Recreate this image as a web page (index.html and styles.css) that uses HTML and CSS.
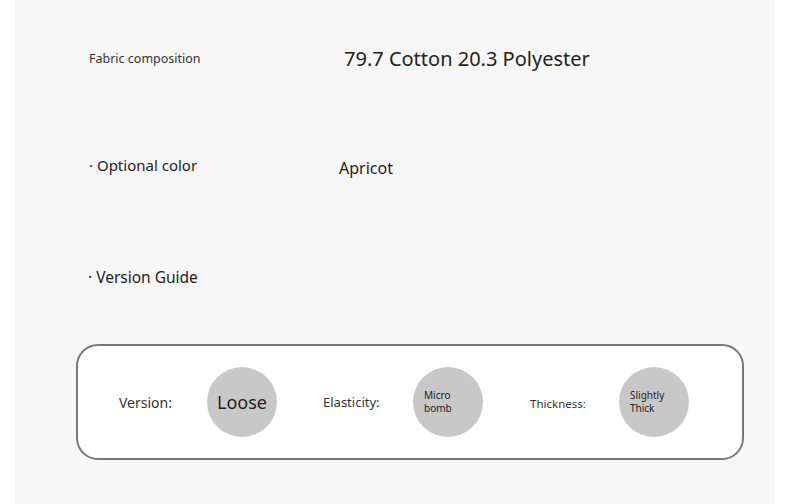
FILE: index.html
```html
<!DOCTYPE html>
<html>
<head>
<meta charset="utf-8">
<link rel="stylesheet" href="styles.css">
</head>
<body>
<div class="panel">
  <div class="row row-fabric">
    <span class="label label-fabric">Fabric composition</span>
    <span class="value value-fabric">79.7 Cotton 20.3 Polyester</span>
  </div>
  <div class="row row-color">
    <span class="label label-color">· Optional color</span>
    <span class="value value-color">Apricot</span>
  </div>
  <div class="row row-guide">
    <span class="label label-guide">· Version Guide</span>
  </div>
  <div class="guide-box">
    <div class="item item-version">
      <span class="item-label lbl-version">Version:</span>
      <span class="circle circle-big">Loose</span>
    </div>
    <div class="item item-elastic">
      <span class="item-label lbl-elastic">Elasticity:</span>
      <span class="circle circle-small">Micro<br>bomb</span>
    </div>
    <div class="item item-thick">
      <span class="item-label lbl-thick">Thickness:</span>
      <span class="circle circle-small">Slightly<br>Thick</span>
    </div>
  </div>
</div>
</body>
</html>
```

FILE: styles.css
```css
html, body {
  margin: 0;
  padding: 0;
  background: #ffffff;
}
body {
  font-family: "Noto Sans", "Open Sans", sans-serif;
  color: #222;
}
.panel {
  margin-left: 15px;
  width: 760px;
  height: 504px;
  background: #f7f7f7;
  box-sizing: border-box;
  padding-top: 45px;
}
.row {
  display: flex;
  align-items: center;
}
.row-fabric {
  height: 26px;
}
.label-fabric {
  margin-left: 74px;
  font-size: 12.5px;
  width: 255px;
  color: #333;
}
.value-fabric {
  font-size: 20px;
  color: #222;
}
.row-color {
  margin-top: 82px;
  height: 26px;
}
.label-color {
  margin-left: 74px;
  width: 250px;
  font-size: 15px;
  color: #222;
  margin-bottom: 2px;
}
.value-color {
  font-size: 16px;
  color: #222;
  margin-top: 4px;
}
.row-guide {
  margin-top: 85px;
  height: 26px;
}
.label-guide {
  margin-left: 73px;
  font-size: 15.5px;
  color: #222;
}
.guide-box {
  margin-top: 54px;
  margin-left: 61px;
  width: 668px;
  height: 116px;
  box-sizing: border-box;
  border: 2px solid #777;
  border-radius: 22px;
  background: #fff;
  display: flex;
  align-items: center;
}
.item {
  display: flex;
  align-items: center;
}
.item-label {
  color: #333;
}
.lbl-version {
  margin-left: 41px;
  width: 88px;
  font-size: 14px;
}
.lbl-elastic {
  margin-left: 46px;
  width: 90px;
  font-size: 13px;
}
.lbl-thick {
  margin-left: 47px;
  width: 89px;
  font-size: 11.5px;
  margin-top: 3px;
}
.circle {
  width: 70px;
  height: 70px;
  border-radius: 50%;
  background: #c8c8c8;
  display: flex;
  align-items: center;
  color: #222;
}
.circle-big {
  justify-content: center;
  font-size: 18px;
}
.circle-small {
  font-size: 10px;
  line-height: 13px;
  padding-left: 11px;
  box-sizing: border-box;
}
```
